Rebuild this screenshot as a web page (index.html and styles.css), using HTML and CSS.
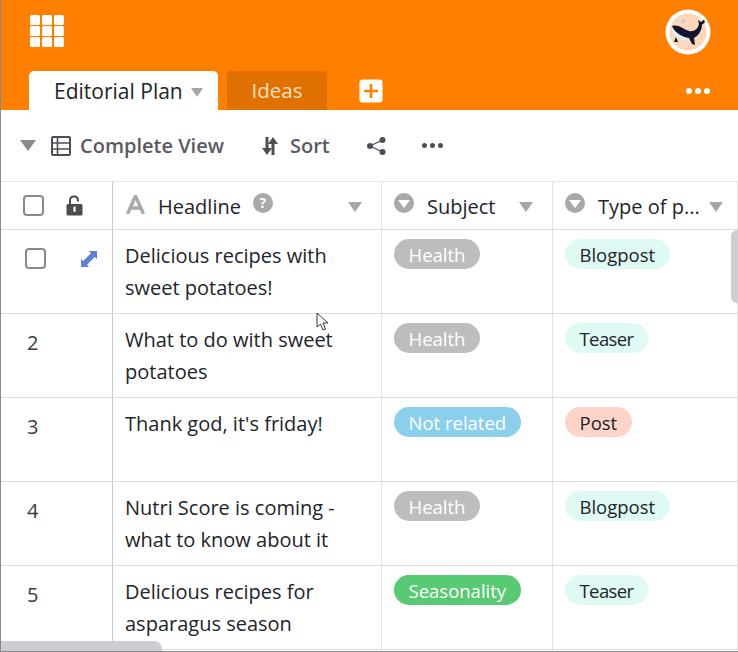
FILE: index.html
```html
<!DOCTYPE html>
<html lang="en">
<head>
<meta charset="utf-8">
<title>Editorial Plan</title>
<link rel="stylesheet" href="styles.css">
</head>
<body>
<div class="app">
  <header class="topbar">
    <div class="brand-row">
      <svg class="apps" width="34" height="32" viewBox="0 0 34 32"><g fill="#fff"><rect x="0" y="0" width="10" height="10" rx="1.5"/><rect x="12" y="0" width="10" height="10" rx="1.5"/><rect x="24" y="0" width="10" height="10" rx="1.5"/><rect x="0" y="11" width="10" height="10" rx="1.5"/><rect x="12" y="11" width="10" height="10" rx="1.5"/><rect x="24" y="11" width="10" height="10" rx="1.5"/><rect x="0" y="22" width="10" height="10" rx="1.5"/><rect x="12" y="22" width="10" height="10" rx="1.5"/><rect x="24" y="22" width="10" height="10" rx="1.5"/></g></svg>
      <svg class="avatar" width="46" height="46" viewBox="0 0 46 46"><circle cx="23" cy="23" r="22.5" fill="#fff"/><circle cx="23" cy="23" r="18.5" fill="#fbd8ba"/><path d="M6 19C8 27 14 32 24 32C20 27 13 23 6 19Z" fill="#dfeff8"/><path d="M7 17C13 15 18 20 24 22C29 23 33 20 34 15L33 11L36 13L39 10.500L40 13.500L37 15.500C37 22 33 27 29 29L30 36L27 35L24 29C17 28 10 24 7 17Z" fill="#12152e"/><path d="M11 28L13 33L9 33Z" fill="#12152e"/><path d="M16 13C17 10 20 10 20 12C20 14 17 15 16 13Z" fill="#b9cfe0"/></svg>
    </div>
    <div class="tab-row">
      <div class="tab tab-active"><span>Editorial Plan</span><i class="caret caret-tab"></i></div>
      <div class="tab tab-other">Ideas</div>
      <svg class="add" width="24" height="24" viewBox="0 0 24 24"><rect x="0.5" y="0.5" width="23" height="23" rx="3" fill="#fff"/><path d="M12 5v14M5 12h14" stroke="#ff8000" stroke-width="2.6"/></svg>
      <div class="dots dots-white"><i></i><i></i><i></i></div>
    </div>
  </header>

  <div class="toolbar">
    <i class="caret caret-view"></i>
    <svg class="tool-icon" width="20" height="20" viewBox="0 0 20 20"><rect x="1" y="1" width="18" height="18" rx="1" fill="none" stroke="#4d4d55" stroke-width="2"/><path d="M1 7h18M1 13h18M6.500 1v18" stroke="#4d4d55" stroke-width="1.600"/></svg>
    <span class="view-name">Complete View</span>
    <svg class="sort-icon" width="16" height="18" viewBox="0 0 16 18"><path d="M3.500 0h3v11H10L5 18L0 11h3.500zM9.500 18h3V7H16L11 0L6 7h3.500z" fill="#4d4d55"/></svg>
    <span class="sort-name">Sort</span>
    <svg class="share" width="19" height="18" viewBox="0 0 19 18"><path d="M3 9L15.500 3M3 9L15.500 15" stroke="#4d4d55" stroke-width="1.300"/><circle cx="3" cy="9" r="3" fill="#4d4d55"/><circle cx="15.500" cy="3" r="3" fill="#4d4d55"/><circle cx="15.500" cy="15" r="3" fill="#4d4d55"/></svg>
    <div class="dots dots-dark"><i></i><i></i><i></i></div>
  </div>

  <div class="table">
    <div class="row head">
      <div class="cell index">
        <span class="check check-head"></span>
        <svg class="lock" width="17" height="21" viewBox="0 0 17 21"><path d="M4 9V5.500C4 3 5.800 1.500 8 1.500S12 3 12 5.500V6.500" fill="none" stroke="#4d4d4d" stroke-width="2"/><rect x="0.500" y="9" width="16" height="11.500" rx="1.500" fill="#4d4d4d"/><path d="M8.500 12.500v3.500" stroke="#fff" stroke-width="2.200" stroke-linecap="round"/></svg>
      </div>
      <div class="cell head-cell">
        <svg class="type-a" width="19" height="19" viewBox="0 0 19 19"><path d="M1.500 19L9.500 1L17.500 19M4.500 13H14.500" fill="none" stroke="#a9a9a9" stroke-width="3.400"/></svg>
        <span class="title title-a">Headline</span>
        <span class="help">?</span>
        <i class="caret caret-head"></i>
      </div>
      <div class="cell head-cell">
        <span class="select-icon"></span>
        <span class="title">Subject</span>
        <i class="caret caret-head"></i>
      </div>
      <div class="cell head-cell">
        <span class="select-icon"></span>
        <span class="title">Type of p...</span>
        <i class="caret caret-head caret-last"></i>
      </div>
    </div>

    <div class="row">
      <div class="cell index">
        <span class="check"></span>
        <svg class="expand" width="16" height="16" viewBox="0 0 16 16"><path d="M8 0H16V8L13.800 6L6 13.800L8 16H0V8L2.200 10L10 2.200Z" fill="#5f7fd2"/></svg>
      </div>
      <div class="cell text">Delicious recipes with sweet potatoes!</div>
      <div class="cell pill-cell"><span class="pill gray">Health</span></div>
      <div class="cell pill-cell"><span class="pill mint">Blogpost</span></div>
    </div>
    <div class="row">
      <div class="cell index num">2</div>
      <div class="cell text">What to do with sweet potatoes</div>
      <div class="cell pill-cell"><span class="pill gray">Health</span></div>
      <div class="cell pill-cell"><span class="pill mint tight">Teaser</span></div>
    </div>
    <div class="row">
      <div class="cell index num">3</div>
      <div class="cell text">Thank god, it's friday!</div>
      <div class="cell pill-cell"><span class="pill blue">Not related</span></div>
      <div class="cell pill-cell"><span class="pill salmon">Post</span></div>
    </div>
    <div class="row">
      <div class="cell index num">4</div>
      <div class="cell text">Nutri Score is coming - what to know about it</div>
      <div class="cell pill-cell"><span class="pill gray">Health</span></div>
      <div class="cell pill-cell"><span class="pill mint">Blogpost</span></div>
    </div>
    <div class="row">
      <div class="cell index num">5</div>
      <div class="cell text">Delicious recipes for asparagus season</div>
      <div class="cell pill-cell"><span class="pill green">Seasonality</span></div>
      <div class="cell pill-cell"><span class="pill mint tight">Teaser</span></div>
    </div>
  </div>

  <div class="scroll-v"></div>
  <div class="scroll-h"></div>
  <svg class="cursor" width="15" height="20" viewBox="0 0 15 20"><path d="M1 1V15L4.500 12L7 18L9.500 17L7 11H12Z" fill="#fff" stroke="#333" stroke-width="1"/></svg>
</div>
</body>
</html>
```

FILE: styles.css
```css
* { box-sizing: border-box; }
html, body { margin: 0; padding: 0; }
body { width: 738px; height: 652px; overflow: hidden; background: #fff; font-family: "Open Sans", "Noto Sans", sans-serif; color: #212529; }
.app { position: relative; width: 738px; height: 652px; overflow: hidden; border-left: 1px solid #8a8a8a; border-bottom: 1px solid #8a8a8a; }

.topbar { height: 110px; background: #ff8000; display: flex; flex-direction: column; }
.brand-row { height: 71px; display: flex; align-items: flex-start; justify-content: space-between; padding: 9px 27px 0 29px; }
.apps { margin-top: 6px; }
.tab-row { height: 39px; display: flex; align-items: flex-start; padding-left: 28px; }
.tab { height: 39px; display: flex; align-items: center; font-size: 20px; }
.tab-active { width: 189px; background: #fff; border-radius: 5px 5px 0 0; padding: 0 0 0 25px; color: #212529; font-size: 21px; }
.tab-other { width: 100px; margin-left: 9px; background: #e07000; border-radius: 3px 3px 0 0; padding-bottom: 2px; justify-content: center; color: #fde0c0; font-size: 20.500px; }
.add { margin: 8px 0 0 32px; }
.dots { display: flex; }
.dots i { display: block; border-radius: 50%; }
.dots-white { margin: 17px 0 0 auto; padding-right: 28px; gap: 3px; }
.dots-white i { width: 6px; height: 6px; background: #fff; }
.dots-dark { gap: 3px; margin-left: 36px; }
.dots-dark i { width: 5px; height: 5px; background: #4d4d55; }

.caret { display: block; width: 0; height: 0; border-style: solid; border-color: #a6a6a6 transparent transparent; }
.caret-tab { border-width: 9px 6.500px 0; margin-left: 8px; margin-top: 3px; }
.caret-view { border-width: 11px 8px 0; border-top-color: #8a8a8a; margin-left: 19px; }
.caret-head { border-width: 10px 7px 0; position: absolute; right: 19px; top: 20px; }
.caret-last { right: 14px; }

.toolbar { height: 71px; display: flex; align-items: center; font-size: 20px; font-weight: 600; color: #5a5a64; }
.tool-icon { margin-left: 15px; }
.view-name { margin-left: 9px; }
.sort-icon { margin-left: 38px; }
.sort-name { margin-left: 12px; }
.share { margin-left: 37px; }

.table { border-top: 1px solid #e5e5e5; }
.row { display: grid; grid-template-columns: 112px 269px 171px 185px; height: 84px; border-bottom: 1px solid #dcdcdc; }
.row.head { height: 48px; }
.cell { position: relative; border-right: 1px solid #e2e2e2; min-width: 0; }
.cell.index { border-right-color: #c8c8c8; }

.head-cell { display: flex; align-items: center; padding-left: 12px; font-size: 20px; color: #212529; }
.type-a { margin: -3px 0 0 1px; flex: none; }
.title { margin-left: 13px; white-space: nowrap; position: relative; top: 1px; }
.title-a { margin-left: 13px; }
.select-icon { position: relative; flex: none; width: 20px; height: 20px; border-radius: 50%; background: #a9a9a9; margin-top: -5px; }
.select-icon::after { content: ""; position: absolute; left: 3.500px; top: 7px; border-style: solid; border-width: 8px 6.500px 0; border-color: #fff transparent transparent; }
.help { flex: none; width: 20px; height: 20px; margin: -5px 0 0 12px; border-radius: 50%; background: #a9a9a9; color: #fff; font-size: 14px; font-weight: 700; line-height: 20px; text-align: center; }

.index { display: block; }
.check { position: absolute; display: block; width: 21px; height: 21px; border: 2px solid #8a8a8a; border-radius: 4px; background: #fff; left: 24px; top: 18px; }
.check-head { left: 22px; top: 13px; }
.lock { position: absolute; left: 65px; top: 13px; }
.expand { position: absolute; left: 80px; top: 21px; }
.num { padding: 15px 0 0 26px; font-size: 20px; color: #3a3a3a; line-height: 27px; }

.text { padding: 10px 30px 0 12px; font-size: 20px; line-height: 32px; color: #212529; }
.pill-cell { padding: 9px 12px 0; }
.pill { display: inline-block; height: 30px; padding: 0 14.500px; border-radius: 15px; font-size: 18.500px; line-height: 32px; white-space: nowrap; }
.tight { letter-spacing: -0.600px; }
.gray { background: #bdbdbd; color: #fff; }
.mint { background: #dff9f4; color: #212529; }
.blue { background: #8acfec; color: #fff; }
.salmon { background: #fcd5c8; color: #212529; }
.green { background: #58ca74; color: #fff; }

.scroll-v { position: absolute; left: 730px; top: 230px; width: 8px; height: 73px; background: #cdced3; border-radius: 6px 0 0 6px; }
.scroll-h { position: absolute; left: 0; top: 641px; width: 161px; height: 10px; background: #cdced3; border-radius: 0 8px 0 0; }
.cursor { position: absolute; left: 315px; top: 312px; }
```
